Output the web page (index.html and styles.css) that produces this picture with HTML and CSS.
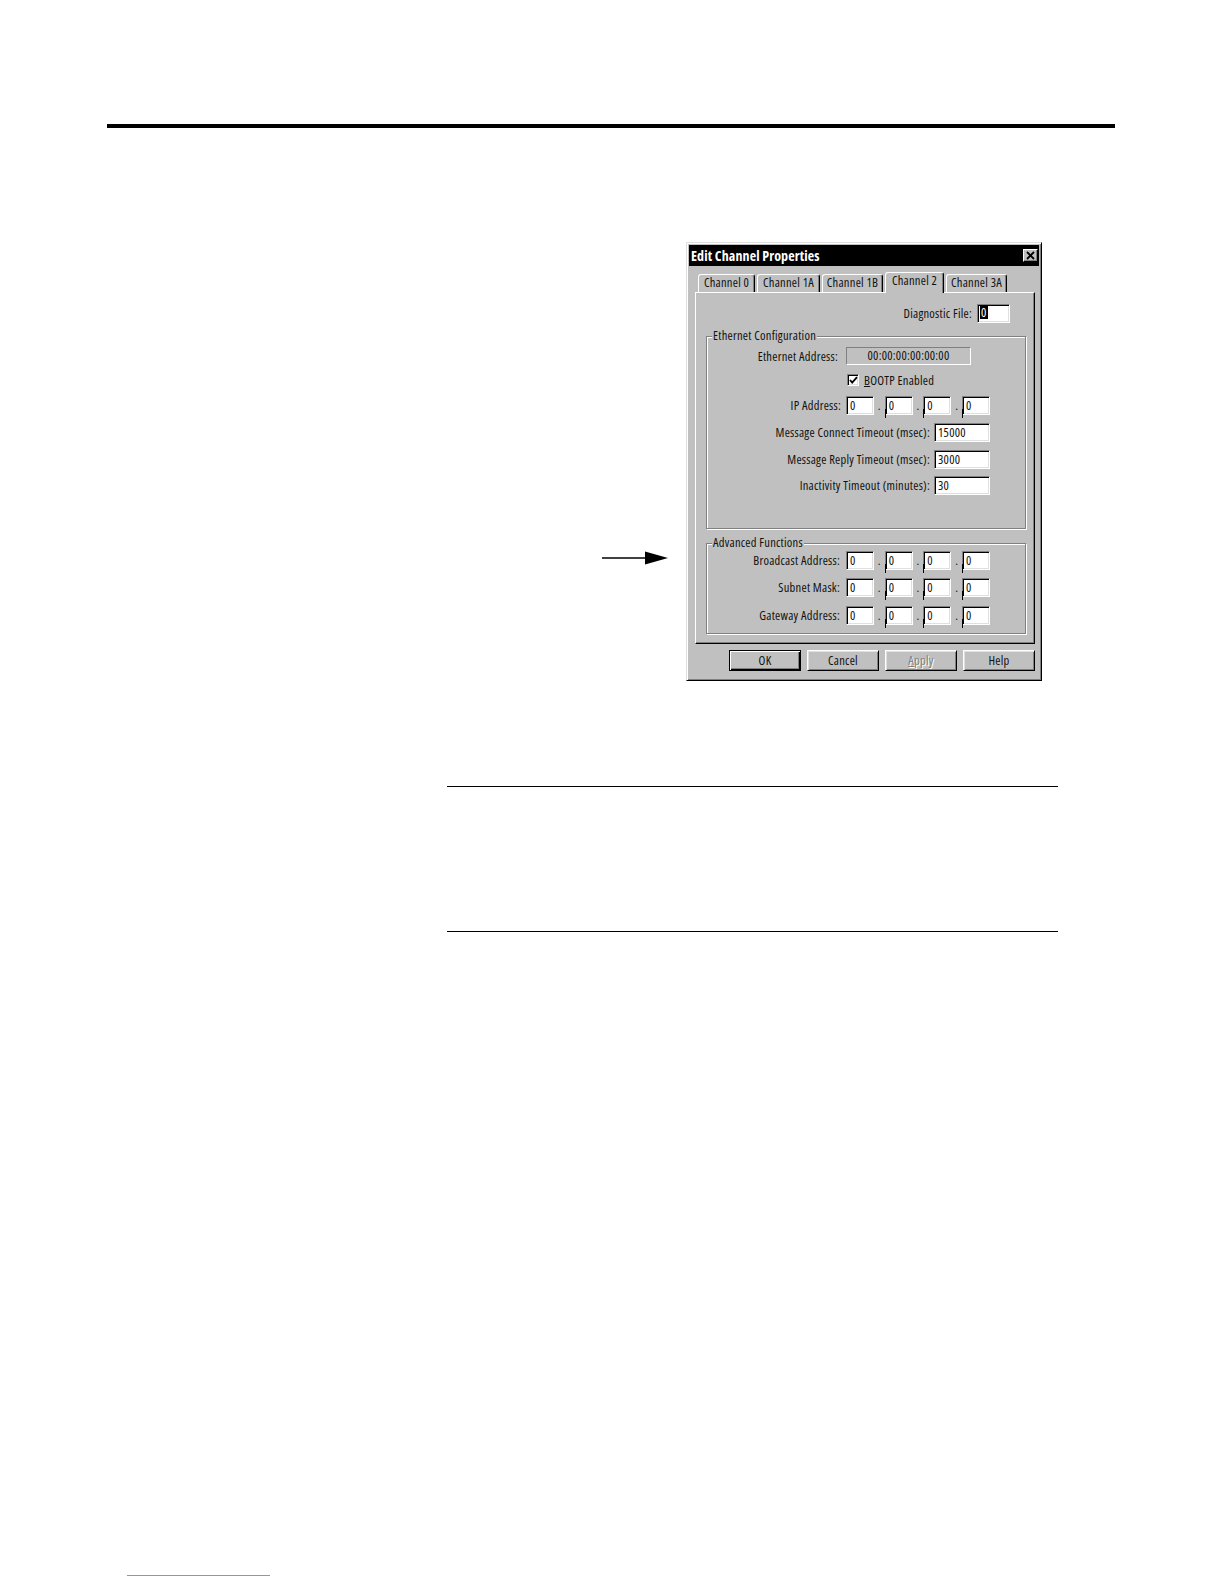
FILE: index.html
```html
<!DOCTYPE html>
<html lang="en">
<head>
<meta charset="utf-8">
<title>Edit Channel Properties</title>
<link rel="stylesheet" href="styles.css">
</head>
<body>
<div class="page">
  <div class="top-rule"></div>

  <div class="figure">
    <div class="callout">
      <svg width="66" height="14" viewBox="0 0 66 14">
        <line x1="0" y1="7" x2="46" y2="7" stroke="#000" stroke-width="1.6"/>
        <polygon points="43,0.5 66,7 43,13.5" fill="#000"/>
      </svg>
    </div>

    <div class="dialog">
      <div class="titlebar">
        <span class="title">Edit Channel Properties</span>
        <span class="close">
          <svg width="13" height="11" viewBox="0 0 13 11">
            <path d="M3 2 L10 9 M10 2 L3 9" stroke="#000" stroke-width="1.8" fill="none"/>
          </svg>
        </span>
      </div>

      <div class="dlg-body">
        <div class="tabs">
          <div class="tab t0">Channel 0</div>
          <div class="tab t1">Channel 1A</div>
          <div class="tab t2">Channel 1B</div>
          <div class="tab t3 active">Channel 2</div>
          <div class="tab t4">Channel 3A</div>
        </div>

        <div class="panel">
          <div class="row diag-row">
            <span class="lbl">Diagnostic File:</span>
            <span class="field diag-field"><span class="sel">0</span></span>
          </div>

          <fieldset class="group eth-group">
            <legend>Ethernet Configuration</legend>
            <div class="row eth-row">
              <span class="lbl">Ethernet Address:</span>
              <span class="static">00:00:00:00:00:00</span>
            </div>
            <div class="row check-row">
              <span class="checkbox">
                <svg width="9" height="9" viewBox="0 0 9 9">
                  <path d="M1 4 L3.2 6.6 L8 1.2" stroke="#000" stroke-width="1.8" fill="none"/>
                </svg>
              </span>
              <span class="lbl"><u>B</u>OOTP Enabled</span>
            </div>
            <div class="row ip-row">
              <span class="lbl">IP Address:</span>
              <span class="ip">
                <span class="field">0</span><span class="dot">.</span><span class="field tick">0</span><span class="dot">.</span><span class="field tick">0</span><span class="dot">.</span><span class="field tick">0</span>
              </span>
            </div>
            <div class="row t-row r1">
              <span class="lbl">Message Connect Timeout (msec):</span>
              <span class="field tfield">15000</span>
            </div>
            <div class="row t-row r2">
              <span class="lbl">Message Reply Timeout (msec):</span>
              <span class="field tfield">3000</span>
            </div>
            <div class="row t-row r3">
              <span class="lbl">Inactivity Timeout (minutes):</span>
              <span class="field tfield">30</span>
            </div>
          </fieldset>

          <fieldset class="group adv-group">
            <legend>Advanced Functions</legend>
            <div class="row a-row a1">
              <span class="lbl">Broadcast Address:</span>
              <span class="ip">
                <span class="field">0</span><span class="dot">.</span><span class="field tick">0</span><span class="dot">.</span><span class="field tick">0</span><span class="dot">.</span><span class="field tick">0</span>
              </span>
            </div>
            <div class="row a-row a2">
              <span class="lbl">Subnet Mask:</span>
              <span class="ip">
                <span class="field">0</span><span class="dot">.</span><span class="field tick">0</span><span class="dot">.</span><span class="field tick">0</span><span class="dot">.</span><span class="field tick">0</span>
              </span>
            </div>
            <div class="row a-row a3">
              <span class="lbl">Gateway Address:</span>
              <span class="ip">
                <span class="field">0</span><span class="dot">.</span><span class="field tick">0</span><span class="dot">.</span><span class="field tick">0</span><span class="dot">.</span><span class="field tick">0</span>
              </span>
            </div>
          </fieldset>
        </div>

        <div class="buttons">
          <span class="btn default">OK</span>
          <span class="btn">Cancel</span>
          <span class="btn disabled"><u>A</u>pply</span>
          <span class="btn">Help</span>
        </div>
      </div>
    </div>
  </div>

  <div class="rule rule-a"></div>
  <div class="rule rule-b"></div>
  <div class="foot-line"></div>
</div>
</body>
</html>
```

FILE: styles.css
```css
* { box-sizing: border-box; }

html, body {
  margin: 0;
  background: #fff;
}

body {
  font-family: "Open Sans", "Liberation Sans", Arial, sans-serif;
  font-stretch: 75%;
  font-size: 12.5px;
  letter-spacing: 0.25px;
  color: #111;
}

.page {
  width: 1224px;
  height: 1584px;
  overflow: hidden;
  padding-top: 124px;
}

.top-rule {
  margin-left: 107px;
  width: 1008px;
  height: 4px;
  background: #000;
}

.figure {
  display: flex;
  align-items: flex-start;
  margin-top: 114px;
  padding-left: 602px;
}

.callout {
  width: 66px;
  height: 14px;
  margin-top: 309px;
  margin-right: 18px;
}

.callout svg { display: block; }

/* dialog frame */
.dialog {
  width: 356px;
  background: #c0c0c0;
  border: 1px solid;
  border-color: #dfdfdf #000 #000 #dfdfdf;
  box-shadow: inset 1px 1px #fff, inset -1px -1px #808080;
  padding: 2px;
}

.titlebar {
  height: 21px;
  background: #000;
  color: #fff;
  display: flex;
  align-items: center;
  justify-content: space-between;
  padding: 0 1px 0 2px;
}

.title {
  font-weight: bold;
  font-size: 14px;
  letter-spacing: 0.1px;
  line-height: 21px;
}

.close {
  width: 15px;
  height: 13px;
  background: #c0c0c0;
  border: 1px solid;
  border-color: #fff #000 #000 #fff;
  box-shadow: inset -1px -1px #808080;
  display: flex;
  align-items: center;
  justify-content: center;
}

.close svg { display: block; }

.dlg-body {
  padding: 6px 4px 7px 6px;
}

/* tabs */
.tabs {
  display: flex;
  align-items: flex-end;
  gap: 2px;
  height: 20px;
  padding-left: 3px;
}

.tab {
  height: 18px;
  background: #c0c0c0;
  border-style: solid;
  border-width: 1px 1px 0 1px;
  border-color: #fff #000 transparent #fff;
  box-shadow: inset -1px 0 #808080;
  border-radius: 3px 3px 0 0;
  text-align: center;
  line-height: 16px;
  white-space: nowrap;
}

.t0 { width: 57px; }
.t1 { width: 63px; }
.t2 { width: 61px; }
.t3 { width: 59px; }
.t4 { width: 61px; }

.tab.active {
  position: relative;
  z-index: 1;
  height: 21px;
  margin-bottom: -1px;
  line-height: 15px;
}

/* tab panel */
.panel {
  border: 1px solid;
  border-color: #fff #000 #000 #fff;
  box-shadow: inset -1px -1px #808080;
  padding: 11px 8px 9px 10px;
}

.row {
  display: flex;
  justify-content: flex-end;
  align-items: center;
  gap: 5px;
  height: 19px;
  white-space: nowrap;
}

.lbl { line-height: 15px; }

.field {
  position: relative;
  display: block;
  height: 19px;
  background: #fff;
  border: 1px solid;
  border-color: #808080 #fff #fff #808080;
  box-shadow: inset 1px 1px #000, inset -1px -1px #dfdfdf;
  padding: 0 3px;
  line-height: 17px;
}

.diag-row { padding-right: 16px; }

.diag-field { width: 33px; padding-left: 2px; }

.sel {
  display: inline-block;
  background: #000;
  color: #fff;
  line-height: 13px;
  padding: 0 1px;
  vertical-align: 1px;
}

/* group boxes */
.group {
  margin: 0;
  min-width: 0;
  border: 1px solid #808080;
  box-shadow: inset 1px 1px #fff, 1px 1px #fff;
}

.group legend {
  margin-left: 5px;
  padding: 0 1px;
  line-height: 14px;
  background: #c0c0c0;
}

.eth-group {
  margin-top: 6px;
  padding: 4px 35px 33px 0;
}

.adv-group {
  margin-top: 7px;
  padding: 1px 35px 8px 0;
}

.eth-row { height: 18px; gap: 8px; }

.static {
  display: block;
  width: 125px;
  height: 18px;
  margin-right: 19px;
  border: 1px solid;
  border-color: #808080 #fff #fff #808080;
  text-align: center;
  line-height: 15px;
}

.check-row {
  justify-content: flex-start;
  padding-left: 140px;
  height: 16px;
  margin-top: 7px;
  gap: 5px;
}

.checkbox {
  display: flex;
  align-items: center;
  justify-content: center;
  width: 12px;
  height: 12px;
  background: #fff;
  border: 1px solid;
  border-color: #808080 #fff #fff #808080;
  box-shadow: inset 1px 1px #000, inset -1px -1px #dfdfdf;
}

.checkbox svg { display: block; }

.ip-row { margin-top: 8px; }
.r1 { margin-top: 8px; }
.r2 { margin-top: 8px; }
.r3 { margin-top: 7px; }
.t-row { gap: 4px; }

.tfield { width: 56px; }

.a2 { margin-top: 8px; }
.a3 { margin-top: 9px; }
.a-row { gap: 6px; }

.ip {
  display: flex;
  width: 144px;
  height: 19px;
}

.ip .field { width: 28px; flex: none; }

.ip .dot {
  flex: 1;
  text-align: center;
  line-height: 19px;
}

.ip .tick::before {
  content: "";
  position: absolute;
  left: -1px;
  top: 12px;
  width: 1px;
  height: 9px;
  background: #000;
}

/* buttons */
.buttons {
  display: flex;
  justify-content: flex-end;
  gap: 6px;
  margin-top: 6px;
}

.btn {
  display: block;
  width: 72px;
  height: 21px;
  text-align: center;
  line-height: 19px;
  background: #c0c0c0;
  border: 1px solid;
  border-color: #fff #000 #000 #fff;
  box-shadow: inset 1px 1px #dfdfdf, inset -1px -1px #808080;
}

.btn.default {
  border-color: #000;
  box-shadow: inset 1px 1px #fff, inset -1px -1px #000, inset -2px -2px #808080;
}

.btn.disabled {
  color: #808080;
  text-shadow: 1px 1px 0 #fff;
}

/* page rules */
.rule {
  margin-left: 447px;
  width: 611px;
  height: 1px;
  background: #000;
}

.rule-a { margin-top: 105px; }
.rule-b { margin-top: 144px; }

.foot-line {
  margin-top: 643px;
  margin-left: 127px;
  width: 143px;
  height: 1px;
  background: #8c93c9;
}
```
